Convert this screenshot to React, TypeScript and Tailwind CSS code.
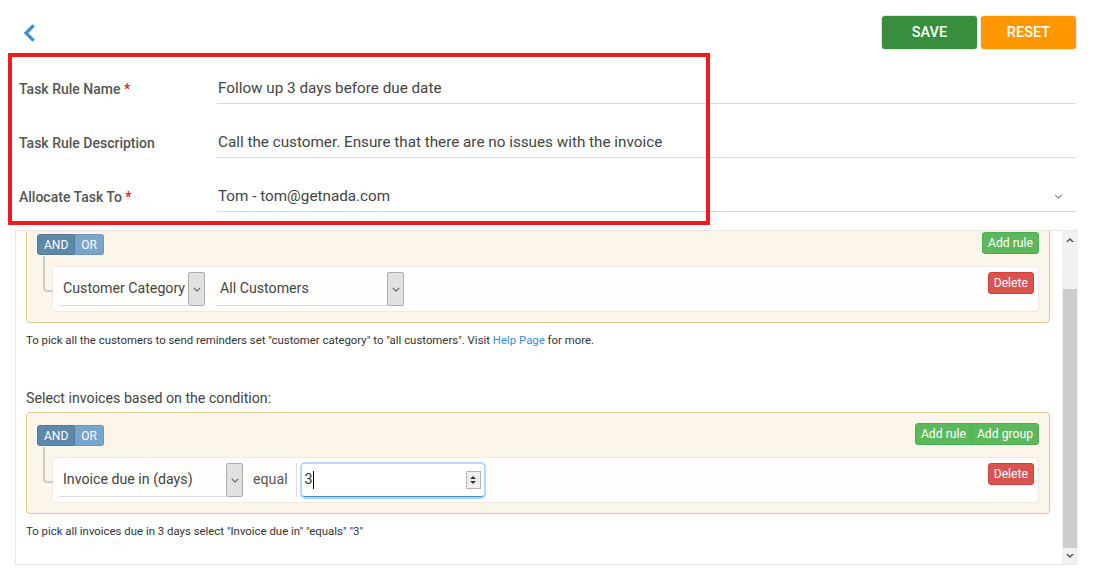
import React from 'react';

function SmallChevron({ className }: { className?: string }) {
  return (
    <svg viewBox="0 0 10 6" className={className} fill="none" stroke="currentColor" strokeWidth="1.3">
      <path d="M1 1l4 4 4-4" />
    </svg>
  );
}

function FakeSelect({ label, width }: { label: string; width: string }) {
  return (
    <div className={`flex h-[34px] ${width}`}>
      <div className="flex-1 flex items-center pl-[4px] border-b border-[#dadada] text-[14.2px] text-[#444]">
        {label}
      </div>
      <div className="w-[17px] flex items-center justify-center bg-[#e1e1e1] border border-[#adadad] rounded-[2px] text-[#555]">
        <SmallChevron className="w-[8px] h-[5px]" />
      </div>
    </div>
  );
}

function AndOr() {
  return (
    <div className="flex mt-[2px] h-[21px] text-[12px] text-white">
      <div className="px-[6px] flex items-center bg-[#5e88a9] border border-[#537a99] rounded-l-[3px]">AND</div>
      <div className="px-[6px] flex items-center bg-[#79a5ca] border border-[#6c98be] border-l-0 rounded-r-[3px]">OR</div>
    </div>
  );
}

function DeleteButton() {
  return (
    <button className="ml-auto self-start mt-[5px] h-[22px] px-[5px] text-[12.2px] text-white bg-[#d9534f] border border-[#d43f3a] rounded-[3px]">
      Delete
    </button>
  );
}

function RuleRow({ children }: { children: React.ReactNode }) {
  return (
    <div className="relative mt-[10px] ml-[15px] h-[46px] bg-[#fffefd] border border-[#ebebeb] rounded-[4px] flex items-center pl-[6px] pr-[4px]">
      <span className="absolute left-[-10px] top-[-11px] w-[10px] h-[36px] border-l-2 border-b-2 border-[#cccccc] rounded-bl-[4px]" />
      {children}
      <DeleteButton />
    </div>
  );
}

function Group({ withGroup, children }: { withGroup?: boolean; children: React.ReactNode }) {
  return (
    <div className="bg-[#fcf5e9] border border-[#dfcb98] rounded-[4px] pt-[10px] pb-[10px] px-[10px]">
      <div className="flex justify-between items-start h-[24px]">
        <AndOr />
        <div className="flex h-[22px] text-[12.2px] text-white bg-[#5cb85c] border border-[#4cae4c] rounded-[3px]">
          <div className="px-[5px] flex items-center">Add rule</div>
          {withGroup && <div className="px-[5px] flex items-center border-l border-[#4cae4c]">Add group</div>}
        </div>
      </div>
      {children}
    </div>
  );
}

function Scrollbar() {
  return (
    <div className="w-[16px] h-full bg-[#f1f1f1] flex flex-col">
      <div className="h-[17px] flex items-center justify-center text-[#505050]">
        <svg viewBox="0 0 8 5" className="w-[8px] h-[5px]"><path d="M0 5L4 1l4 4H6L4 3 2 5z" fill="currentColor" /></svg>
      </div>
      <div className="mt-[41px] mx-[1px] h-[259px] bg-[#cdcdcd]" />
      <div className="flex-1 flex items-center justify-center text-[#505050]">
        <svg viewBox="0 0 8 5" className="w-[8px] h-[5px]"><path d="M0 0l4 4 4-4H6L4 2 2 0z" fill="currentColor" /></svg>
      </div>
    </div>
  );
}

function FormRow({ label, value, required, dropdown }: { label: string; value: string; required?: boolean; dropdown?: boolean }) {
  return (
    <div className="flex items-center h-[31px]">
      <div className="w-[217px] pl-[19px] pt-[2px] text-[14px] font-medium text-[#555]">
        {label}
        {required && <span className="text-[#ee1111]"> *</span>}
      </div>
      <div className="flex-1 h-full flex items-center border-b border-[#d6dddd] pl-[1px] pr-[13px] text-[15.25px] text-[#444]">
        <span className="flex-1">{value}</span>
        {dropdown && <SmallChevron className="w-[9px] h-[5px] text-[#8a8a8a]" />}
      </div>
    </div>
  );
}

export default function App() {
  return (
    <div className="relative w-[1095px] h-[584px] bg-white overflow-hidden font-['Roboto','Liberation_Sans',sans-serif]">
      {/* Header */}
      <div className="flex items-center justify-between pt-[16px] pl-[22px] pr-[19px]">
        <svg viewBox="0 0 14 18" className="w-[14px] h-[18px] text-[#3b8fdc]" fill="none" stroke="currentColor" strokeWidth="3.2" strokeLinecap="square">
          <path d="M10.5 2.5L4 9l6.5 6.5" />
        </svg>
        <div className="flex gap-[4px]">
          <button className="w-[95px] h-[33px] rounded-[3px] bg-[#388e3c] text-white text-[14.5px] font-medium shadow-[0_0_0_1px_#e4e4e4]">SAVE</button>
          <button className="w-[95px] h-[33px] rounded-[3px] bg-[#ff9800] text-white text-[14.5px] font-medium shadow-[0_0_0_1px_#ececec]">RESET</button>
        </div>
      </div>

      {/* Form */}
      <div className="mt-[24px] flex flex-col gap-[23px] pr-[19px]">
        <FormRow label="Task Rule Name" value="Follow up 3 days before due date" required />
        <FormRow label="Task Rule Description" value="Call the customer. Ensure that there are no issues with the invoice" />
        <FormRow label="Allocate Task To" value="Tom - tom@getnada.com" required dropdown />
      </div>

      {/* Conditions panel */}
      <div className="ml-[15px] mt-[18px] w-[1063px] h-[335px] border-t border-b border-l border-[#e8e8e8] flex overflow-hidden">
        <div className="flex-1 overflow-hidden pl-[10px] pr-[12px]">
          <div className="-mt-[10px]">
            <Group>
              <RuleRow>
                <div className="flex items-center gap-[11px]">
                  <FakeSelect label="Customer Category" width="w-[146px]" />
                  <FakeSelect label="All Customers" width="w-[188px]" />
                </div>
              </RuleRow>
            </Group>
            <p className="mt-[9px] text-[11.4px] leading-[16px] text-[#333]">
              To pick all the customers to send reminders set "customer category" to "all customers". Visit{' '}
              <span className="text-[#3c8dde]">Help Page</span> for more.
            </p>
            <p className="mt-[40px] text-[14.2px] leading-[20px] text-[#444]">Select invoices based on the condition:</p>
            <div className="mt-[4px]">
              <Group withGroup>
                <RuleRow>
                  <div className="flex items-center">
                    <FakeSelect label="Invoice due in (days)" width="w-[184px]" />
                    <span className="ml-[10px] text-[14.2px] text-[#555]">equal</span>
                    <span className="ml-[8px] w-px h-[34px] bg-[#dddddd]" />
                    <div className="ml-[3px] w-[186px] h-[37px] rounded-[5px] border-2 border-[#b4d8fa] flex">
                      <div className="flex-1 flex items-center pl-[3px] pr-[3px] border-b border-[#3b8ed8] rounded-[3px] bg-white">
                        <span className="text-[14.2px] text-[#333]">3</span>
                        <span className="w-px h-[18px] bg-black" />
                        <div className="ml-auto w-[15px] h-[18px] flex flex-col items-center justify-center gap-[2px] bg-[#eeeeee] border border-[#b5b5b5]">
                          <svg viewBox="0 0 6 3" className="w-[6px] h-[3px]"><path d="M0 3L3 0l3 3z" fill="#333" /></svg>
                          <svg viewBox="0 0 6 3" className="w-[6px] h-[3px]"><path d="M0 0l3 3 3-3z" fill="#333" /></svg>
                        </div>
                      </div>
                    </div>
                  </div>
                </RuleRow>
              </Group>
            </div>
            <p className="mt-[9px] text-[11.4px] leading-[16px] text-[#333]">
              To pick all invoices due in 3 days select "Invoice due in" "equals" "3"
            </p>
          </div>
        </div>
        <Scrollbar />
      </div>

      {/* Annotation frame */}
      <div className="absolute left-[8px] top-[53px] w-[702px] h-[172px] border-4 border-[#ed1c24] pointer-events-none" />
    </div>
  );
}
